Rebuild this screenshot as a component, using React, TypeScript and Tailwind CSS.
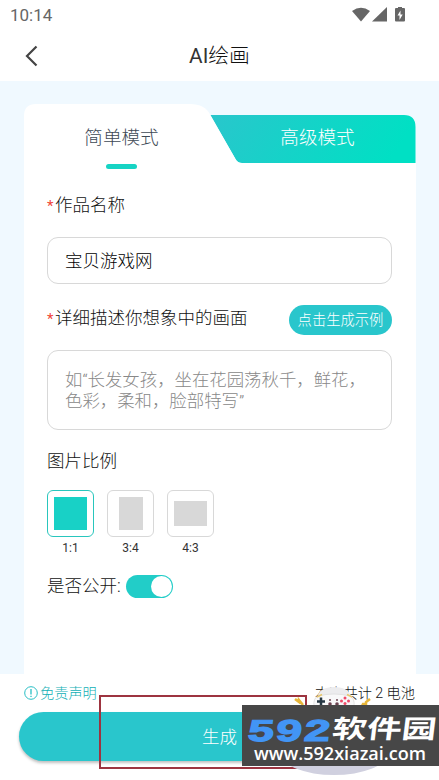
import React from "react";

const sans = "font-['Roboto','Noto_Sans_CJK_SC',sans-serif]";

function StatusBar() {
  return (
    <div className="flex h-[31px] items-center justify-between pl-[10px] pr-[32px] text-[#666]">
      <span className="text-[17px] font-normal leading-none">10:14</span>
      <svg className="h-[18px] w-[55px]" viewBox="0 0 55 18" fill="#666">
        <path d="M0 4Q9 -2.500 18 4L9 14.500Z" />
        <path d="M35 0V14.500H20Z" />
        <path fillRule="evenodd" d="M46 -0.500h4v1.500h2q1 0 1 1v11.500q0 1-1 1h-8q-1 0-1-1V2q0-1 1-1h2ZM48.500 3.500l-3 5h2V13l3.200-5.500H48.500Z" />
      </svg>
    </div>
  );
}

function Tabs() {
  return (
    <div className="relative h-[59px]">
      <svg className="absolute left-0 top-0 h-[59px] w-[392px]" viewBox="0 0 392 59">
        <defs>
          <linearGradient id="tab" x1="0" x2="1" y1="0" y2="0.15">
            <stop offset="0" stopColor="#29c6cc" />
            <stop offset="1" stopColor="#00e0c4" />
          </linearGradient>
        </defs>
        <path d="M186 11H380Q391.500 11 391.500 23V59H218Q213.500 59 211.500 55Z" fill="url(#tab)" />
        <path d="M0 59V12Q0 0 12 0H166Q181 0 186.500 11L211.500 55Q213.500 59 218 59Z" fill="#fff" />
      </svg>
      <div className="relative flex h-[66px] text-[18.600px]">
        <span className="w-[195px] text-center leading-[68px] text-[#3e4955]">简单模式</span>
        <span className="w-[197px] text-center leading-[68px] text-white">高级模式</span>
      </div>
      <div className="absolute left-[82px] top-[60px] h-[5px] w-[31px] rounded-full bg-[#16d4c4]" />
    </div>
  );
}

function Required() {
  return <span className="mr-[1px] inline-block w-[7px] pt-[3px] text-[15px] font-normal leading-none text-[#f04438]">*</span>;
}

function Ratio({ label, box, shape }: { label: string; box: string; shape: string }) {
  return (
    <div className="flex w-[47px] flex-col items-center">
      <div className={`flex h-[47px] w-[47px] items-center justify-center rounded-[6px] border ${box}`}>
        <div className={shape} />
      </div>
      <span className="mt-[4px] text-[12px] font-normal leading-[14px] text-[#333]">{label}</span>
    </div>
  );
}

function Form() {
  return (
    <div className="flex h-[511px] flex-col bg-white pl-[23px] pr-[24px]">
      <div className="mt-[29px] flex h-[26px] items-center text-[17.500px]">
        <Required />作品名称
      </div>
      <div className="mt-[19px] h-[47px] rounded-[11px] border border-[#d8d8d8] pl-[17px] text-[17.500px] leading-[46px] text-black">
        宝贝游戏网
      </div>
      <div className="mt-[21px] flex h-[30px] items-center justify-between">
        <div className="mb-[4px] flex h-[26px] items-center text-[17.500px]">
          <Required />详细描述你想象中的画面
        </div>
        <button className="h-[30px] w-[103px] rounded-full bg-[#29c6cc] text-[14.300px] leading-[31px] text-white">
          点击生成示例
        </button>
      </div>
      <div className="mt-[15px] h-[80px] whitespace-nowrap rounded-[11px] border border-[#d8d8d8] pl-[17px] pt-[19px] text-[17.400px] leading-[20.500px] text-[#888]">
        如“长发女孩，坐在花园荡秋千，鲜花，
        <br />
        色彩，柔和，脸部特写”
      </div>
      <div className="mt-[18px] text-[17.500px] leading-[26px]">图片比例</div>
      <div className="mt-[16px] flex gap-[13px]">
        <Ratio label="1:1" box="border-[#29c6bd]" shape="h-[33px] w-[33px] bg-[#18d1c6]" />
        <Ratio label="3:4" box="border-[#d8d8d8]" shape="h-[33px] w-[24px] bg-[#d8d8d8]" />
        <Ratio label="4:3" box="border-[#d8d8d8]" shape="h-[25px] w-[33px] bg-[#d8d8d8]" />
      </div>
      <div className="mt-[18px] flex items-center text-[17.500px] leading-[26px]">
        是否公开:
        <div className="ml-[5px] flex h-[23px] w-[47px] items-center justify-end rounded-full bg-[#22cdc8] pr-[1px]">
          <div className="h-[21px] w-[21px] rounded-full bg-white" />
        </div>
      </div>
    </div>
  );
}

function Watermark() {
  return (
    <div className="absolute left-[242px] top-[683px] h-[97px] w-[197px]">
      <svg className="absolute left-0 top-0 h-[97px] w-[197px]" viewBox="0 0 197 97">
        <ellipse cx="92" cy="71" rx="53" ry="21" fill="#d0d0df" />
        <path d="M75 15Q77 4 92 4Q107 4 110 15Z" fill="#ececee" />
        <path d="M72 24Q71 15 76 13Q92 9 108 13Q113 15 112 24Z" fill="#f8f8f9" stroke="#ddd" strokeWidth="0.800" />
        <path d="M75 14l5-2.500M110 14l-5-2.500" stroke="#e7c66a" strokeWidth="1.500" />
        <path d="M79 14.500v8M75 18.500h8" stroke="#263743" strokeWidth="2.500" />
        <g fill="#6c4350">
          <circle cx="88" cy="17" r="1" /><circle cx="95" cy="17" r="1" />
          <circle cx="88" cy="21" r="1.800" /><circle cx="95" cy="21" r="1.800" />
        </g>
        <g fill="#ef4967"><circle cx="103" cy="15" r="1.500" /><circle cx="103" cy="20.500" r="1.500" /><circle cx="99.500" cy="18" r="1.500" /><circle cx="106.500" cy="18" r="1.500" /></g>
        <path d="M53 16l4 3v-2l4 5M128 16l-4 3v2h-3l-1 2" stroke="#e7b63a" strokeWidth="2.500" fill="none" />
      </svg>
      <div className="absolute left-0 top-[22px] h-[61px] w-[197px] overflow-hidden bg-[#474747] text-white">
        <svg className="h-[61px] w-[197px]" viewBox="0 0 197 61">
          <g transform="translate(0 36) skewX(-7)">
            <text x="4" y="-0.500" fontSize="31.500" fontWeight="700" fontFamily="Liberation Mono, monospace" textLength="84" lengthAdjust="spacingAndGlyphs" fill="#4295f5" stroke="#4295f5" strokeWidth="1.200">592</text>
            <text x="89" y="-3" fontSize="25.500" fontWeight="700" fontFamily="Noto Sans CJK SC, sans-serif" textLength="104" lengthAdjust="spacingAndGlyphs" fill="#fff">软件园</text>
          </g>
          <text x="12" y="54.500" fontSize="18.500" fontFamily="Open Sans, sans-serif" fontWeight="600" textLength="172" lengthAdjust="spacingAndGlyphs" fill="#fff">www.592xiazai.com</text>
        </svg>
      </div>
    </div>
  );
}

export default function App() {
  return (
    <div className={`relative h-[780px] w-[439px] overflow-hidden bg-white font-light text-[#111] ${sans}`}>
      <StatusBar />
      <header className="grid h-[50px] grid-cols-[60px_1fr_60px] items-center">
        <svg className="ml-[25px] h-[22px] w-[14px]" viewBox="0 0 14 22" fill="none" stroke="#444" strokeWidth="2.200">
          <path d="M11.500 1.500L2 11L11.500 20.500" />
        </svg>
        <h1 className="text-center text-[20.800px] font-normal leading-[50px] text-[#333]">
          AI<span className="font-light text-[#111]">绘画</span>
        </h1>
      </header>
      <main className="h-[593px] bg-[#f0f9ff] pl-[24px] pr-[23px] pt-[23px]">
        <Tabs />
        <Form />
      </main>
      <footer className="h-[106px] bg-white">
        <div className="flex h-[39px] items-center justify-between pl-[24px] pr-[24px]">
          <div className="flex items-center gap-[2px] text-[14.200px] text-[#12b0b6]">
            <svg className="h-[14px] w-[14px]" viewBox="0 0 14 14" fill="none" stroke="#29bfc5">
              <circle cx="7" cy="7" r="6.300" />
              <path d="M7 3v5.500M7 9.700v1.300" strokeWidth="1.300" />
            </svg>
            免责声明
          </div>
          <span className="text-[14.200px]">本次共计 2 电池</span>
        </div>
        <button className="-mt-[1px] ml-[19px] block h-[49px] w-[401px] rounded-full bg-[#29c6cc] text-[17.500px] leading-[51px] text-white shadow-[0_2px_3px_rgba(0,0,0,0.250)]">
          生成
        </button>
      </footer>
      <div className="absolute left-[99px] top-[695px] h-[74px] w-[208px] border-2 border-[#9d3440]" />
      <Watermark />
    </div>
  );
}
